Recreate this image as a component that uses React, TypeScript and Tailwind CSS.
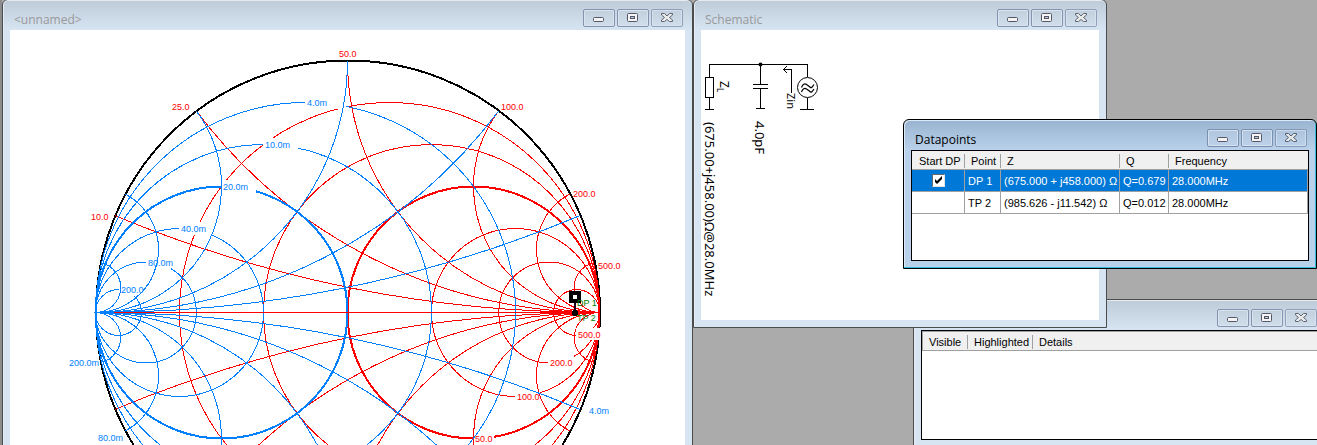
import type { ReactNode } from 'react';

const CX = 347.5;
const CY = 312.5;
const R = 252;
const STEPS = [0.2, 0.5, 1, 2, 4, 10];
const RED = '#ff0000';
const BLUE = '#0080ff';

interface ChartLabel {
  x: number;
  y: number;
  text: string;
  // width of the blanked area behind the text
  blank?: number;
}

const redLabels: ChartLabel[] = [
  { x: 475, y: 442, text: '50.0', blank: 20 },
  { x: 517, y: 400, text: '100.0', blank: 24 },
  { x: 550, y: 366, text: '200.0', blank: 25 },
];

const blueLabels: ChartLabel[] = [
  { x: 307, y: 106, text: '4.0m', blank: 40 },
  { x: 265, y: 148, text: '10.0m', blank: 34 },
  { x: 223, y: 190, text: '20.0m', blank: 34 },
  { x: 181, y: 232, text: '40.0m', blank: 32 },
  { x: 148, y: 266, text: '80.0m', blank: 24 },
  { x: 121, y: 293, text: '200.0', blank: 20 },
];

const rimLabels: (ChartLabel & { color: string })[] = [
  { x: 339, y: 57, text: '50.0', color: RED },
  { x: 172, y: 110, text: '25.0', color: RED },
  { x: 501, y: 110, text: '100.0', color: RED },
  { x: 91, y: 220, text: '10.0', color: RED },
  { x: 573, y: 197, text: '200.0', color: RED },
  { x: 598, y: 269, text: '500.0', color: RED },
  { x: 589, y: 414, text: '4.0m', color: BLUE },
  { x: 69, y: 366, text: '200.0m', color: BLUE },
  { x: 98, y: 441, text: '80.0m', color: BLUE },
];

function Circles({ side, color }: { side: 1 | -1; color: string }) {
  return (
    <g fill="none" stroke={color}>
      {STEPS.map(r => (
        <circle
          key={r}
          cx={CX + (side * R * r) / (1 + r)}
          cy={CY}
          r={R / (1 + r)}
          strokeWidth={r === 1 ? 2 : 1}
        />
      ))}
    </g>
  );
}

function Arcs({ side, color }: { side: 1 | -1; color: string }) {
  return (
    <g fill="none" stroke={color}>
      {STEPS.map(x => {
        const px = CX + (side * R * (x * x - 1)) / (x * x + 1);
        const dy = (R * 2 * x) / (x * x + 1);
        const r = R / x;
        const end = CX + side * R;
        const up = side === 1 ? 0 : 1;
        return (
          <path
            key={x}
            d={`M${px} ${CY - dy}A${r} ${r} 0 0 ${up} ${end} ${CY}M${px} ${CY + dy}A${r} ${r} 0 0 ${1 - up} ${end} ${CY}`}
          />
        );
      })}
    </g>
  );
}

function Labels({ items, color }: { items: ChartLabel[]; color: string }) {
  return (
    <>
      {items.map(l => (
        <g key={l.text}>
          <rect x={l.x - 2} y={l.y - 10} width={(l.blank ?? 24) + 1} height={13} fill="#fff" />
          <text x={l.x} y={l.y} fill={color}>{l.text}</text>
        </g>
      ))}
    </>
  );
}

function SmithChart() {
  return (
    <svg
      viewBox="10 30 675 540"
      width="675"
      height="540"
      className="block shrink-0 font-['Liberation_Sans',Arial,sans-serif] text-[9px]"
      shapeRendering="crispEdges"
      role="img"
      aria-label="Smith chart"
    >
      <circle cx={CX + 0.5} cy={CY} r={R} fill="none" stroke="#000" strokeWidth="2" />
      <Circles side={1} color={RED} />
      <Labels items={redLabels} color={RED} />
      <Arcs side={1} color={RED} />
      <Circles side={-1} color={BLUE} />
      <Labels items={blueLabels} color={BLUE} />
      <Arcs side={-1} color={BLUE} />
      <path d={`M${CX - R + 18} ${CY}H${CX + R}`} stroke={RED} />
      <path d="M540 312.500H594" stroke={RED} strokeWidth="3" />
      <rect x="576" y="328" width="28" height="12" fill="#fff" />
      <text x="578" y="338" fill={RED}>500.0</text>
      {rimLabels.map(l => (
        <text key={`${l.text}-${l.y}`} x={l.x} y={l.y} fill={l.color}>{l.text}</text>
      ))}
      {/* start point and transformed point */}
      <path d="M575 302V312" stroke="#200020" strokeWidth="2" />
      <rect x="569" y="291" width="12" height="12" fill="#000" />
      <rect x="573" y="295" width="4" height="4" fill="#fff" />
      <circle cx="575" cy="313" r="3" fill="#000" />
      <text x="577" y="306" fill="#008000">DP 1</text>
      <text x="577" y="321" fill="#008000">TP 2</text>
    </svg>
  );
}

function Schematic() {
  return (
    <svg
      viewBox="701 30 150 290"
      width="150"
      height="290"
      className="block font-['Noto_Sans','Open_Sans',sans-serif]"
      role="img"
      aria-label="Circuit schematic"
    >
      <g fill="none" stroke="#000" shapeRendering="crispEdges">
        <path d="M709.5 77V64.5H807.5V77M709.5 98V109.5M705 109.5H714M760.5 64V84M753 84.5H768M753 88.5H768M760.5 89V108.5M756 108.5H765M807.5 98V109.5M800 109.5H814" />
        <rect x="705.5" y="77.5" width="8" height="20" />
        <path d="M791.5 93V69.500H783M787 66L783.5 69.500L787 73" />
      </g>
      <circle cx="760.5" cy="64.5" r="2" />
      <circle cx="807.5" cy="87.500" r="10" fill="none" stroke="#000" />
      <path d="M801.5 87.500q2-5 5-3t4 3t3.500-3M801.500 92q2-5 5-3t4 3t3.500-3" fill="none" stroke="#000" strokeWidth="1.2" />
      <text transform="translate(720 81) rotate(90)" fontSize="12">Z</text>
      <text transform="translate(717 88) rotate(90)" fontSize="8">L</text>
      <text transform="translate(787 93) rotate(90)" fontSize="11">Zin</text>
      <text transform="translate(755 121) rotate(90)" fontSize="13">4.0pF</text>
      <text transform="translate(705 122) rotate(90)" fontSize="13">(675.00+j458.00)Ω@28.0MHz</text>
    </svg>
  );
}

function CaptionButtons({ active }: { active?: boolean }) {
  const box = active
    ? 'flex h-[18px] w-8 items-center justify-center rounded-xs border border-[#7d8fae] bg-linear-to-b from-[#b0c5de] to-[#bdd2ea] shadow-[inset_0_0_0_1px_#d3e1f0]'
    : 'flex h-[18px] w-8 items-center justify-center rounded-xs border border-[#8592b0] bg-linear-to-b from-[#c2cfdd] to-[#d0ddeb] shadow-[inset_0_0_0_1px_#d9e4ef]';
  return (
    <div className="flex gap-0.5">
      <button type="button" aria-label="Minimize" className={box}>
        <svg width="12" height="10" viewBox="0 0 12 10">
          <rect x="0.5" y="4.5" width="10" height="4" rx="1" fill="#f4f4f4" stroke="#555768" />
        </svg>
      </button>
      <button type="button" aria-label="Maximize" className={box}>
        <svg width="12" height="10" viewBox="0 0 12 10">
          <rect x="0.5" y="0.5" width="10" height="8" rx="1" fill="#f4f4f4" stroke="#555768" />
          <rect x="3.5" y="3.5" width="4" height="2" fill="#bccbdb" stroke="#555768" />
        </svg>
      </button>
      <button type="button" aria-label="Close" className={`${box} opacity-80`}>
        <svg width="12" height="10" viewBox="0 0 12 10">
          <path d="M.5.5h3L6 3 8.5.5h3V2l-3 2.500 3 2.500v1.500h-3L6 6.500 3.500 8.500h-3V7l3-2.500L.5 2z" fill="#f0f0e8" stroke="#44465a" />
        </svg>
      </button>
    </div>
  );
}

interface WindowProps {
  title: string;
  place: string;
  active?: boolean;
  framed?: boolean;
  children: ReactNode;
}

function MdiWindow({ title, place, active, framed, children }: WindowProps) {
  return (
    <section
      className={`absolute flex flex-col border px-[7px] pb-[7px] ${place} ${
        active
          ? 'rounded-t-md border-black bg-[linear-gradient(#99b4d1,#b9d1ea_30px)] shadow-[inset_-1px_-1px_#35bcd8,inset_1px_1px_#dce9f6]'
          : 'rounded-t-md border-[#4c4c4c] bg-[linear-gradient(#bfcddb_2px,#d7e4f2_30px)] shadow-[inset_0_1px_#e6ebef,inset_1px_0_#e4edf6]'
      }`}
    >
      <header className="flex h-[30px] shrink-0 items-center justify-between pr-0.5 pl-1">
        <h2 className={`pt-2.5 font-['Open_Sans','Noto_Sans',sans-serif] text-xs ${active ? 'text-black' : 'text-[#999]'}`}>
          {title}
        </h2>
        <div className="pt-1.5">
          <CaptionButtons active={active} />
        </div>
      </header>
      <div className={`min-h-0 flex-1 overflow-hidden bg-white ${framed ? 'border border-black' : ''}`}>{children}</div>
    </section>
  );
}

const datapoints = [
  { point: 'DP 1', z: '(675.000 + j458.000) Ω', q: 'Q=0.679', freq: '28.000MHz', start: true },
  { point: 'TP 2', z: '(985.626 - j11.542) Ω', q: 'Q=0.012', freq: '28.000MHz', start: false },
];

function HeadCell({ children, first, last }: { children: ReactNode; first?: boolean; last?: boolean }) {
  return (
    <th className="h-[19px] border-b border-[#a0a0a0] p-0 pt-0.5 text-left font-normal whitespace-nowrap">
      <div
        className={`leading-3.5 ${first ? 'pl-[7px]' : 'pl-1.5'} ${last ? '' : 'border-r border-[#a0a0a0]'}`}
      >
        {children}
      </div>
    </th>
  );
}

function DatapointsTable() {
  const cell = 'border-r border-b border-[#a0a0a0] px-[3px] py-0 pt-0.5';
  return (
    <table className="w-full table-fixed border-separate border-spacing-0 font-['Liberation_Sans',Arial,sans-serif] text-[11px]">
      <colgroup>
        <col className="w-[53px]" />
        <col className="w-9" />
        <col className="w-[119px]" />
        <col className="w-[49px]" />
        <col />
      </colgroup>
      <thead className="bg-[#f0f0f0]">
        <tr>
          <HeadCell first>Start DP</HeadCell>
          <HeadCell>Point</HeadCell>
          <HeadCell>Z</HeadCell>
          <HeadCell>Q</HeadCell>
          <HeadCell last>Frequency</HeadCell>
        </tr>
      </thead>
      <tbody>
        {datapoints.map(d => (
          <tr
            key={d.point}
            className={`h-[22px] whitespace-nowrap ${d.start ? 'bg-[#0078d7] text-white' : 'bg-white'}`}
          >
            <td className={d.start ? 'border-b border-[#a0a0a0] border-r p-0' : 'border-r border-b border-[#a0a0a0] p-0'}>
              {d.start && (
                <label className="relative mx-auto flex size-[13px] items-center justify-center">
                  <input
                    type="checkbox"
                    defaultChecked
                    aria-label="Start DP"
                    className="peer size-[13px] appearance-none border border-t-[#696969] border-r-[#e3e3e3] border-b-[#e3e3e3] border-l-[#696969] bg-white"
                  />
                  <svg viewBox="0 0 13 13" className="pointer-events-none absolute inset-0 hidden size-[13px] peer-checked:block">
                    <path d="M3 5v3l2 2 5-5V2L5 7z" fill="#000" />
                  </svg>
                </label>
              )}
            </td>
            <td className={cell}>{d.point}</td>
            <td className={cell}>{d.z}</td>
            <td className={cell}>{d.q}</td>
            <td className={cell}>{d.freq}</td>
          </tr>
        ))}
      </tbody>
    </table>
  );
}

function CirclesTable() {
  return (
    <table className="w-full table-fixed border-separate border-spacing-0 border-t border-l border-[#a0a0a0] font-['Liberation_Sans',Arial,sans-serif] text-[11px]">
      <colgroup>
        <col className="w-[45px]" />
        <col className="w-[65px]" />
        <col />
      </colgroup>
      <thead className="bg-[#f0f0f0]">
        <tr>
          <HeadCell>Visible</HeadCell>
          <HeadCell>Highlighted</HeadCell>
          <HeadCell last>Details</HeadCell>
        </tr>
      </thead>
    </table>
  );
}

export default function App() {
  return (
    <main className="relative h-screen overflow-hidden border-l-2 border-[#8c8c8c] bg-[#ababab] text-black">
      <MdiWindow title="<unnamed>" place="-top-px left-0 w-[691px] h-[620px]">
        <SmithChart />
      </MdiWindow>
      <MdiWindow title="" framed place="top-[299px] left-[911px] w-[414px] h-[149px]">
        <CirclesTable />
      </MdiWindow>
      <MdiWindow title="Schematic" place="-top-px left-[691px] w-[414px] h-[329px]">
        <Schematic />
      </MdiWindow>
      <MdiWindow title="Datapoints" active framed place="top-[119px] left-[901px] w-[414px] h-[150px]">
        <DatapointsTable />
      </MdiWindow>
    </main>
  );
}
